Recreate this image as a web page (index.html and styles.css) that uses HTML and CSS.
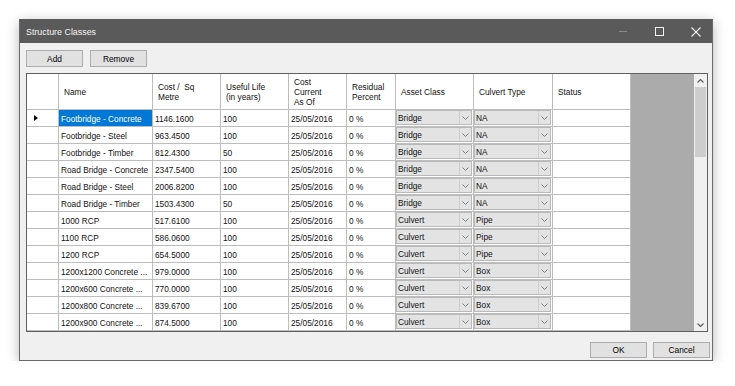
FILE: index.html
```html
<!DOCTYPE html>
<html lang="en">
<head>
    <meta charset="UTF-8">
    <title>Structure Classes</title>
    <link rel="stylesheet" href="styles.css">
</head>
<body>
    <div class="window">
        <div class="titlebar">
            <span class="title">Structure Classes</span>
            <div class="caption-buttons">
                <span class="cap cap-min"></span>
                <span class="cap cap-max"></span>
                <svg class="cap cap-close" width="10" height="10" viewBox="0 0 10 10"><path d="M0.5 0.5 L9.5 9.5 M9.5 0.5 L0.5 9.5" stroke="#f2f2f2" stroke-width="1.1" fill="none"/></svg>
            </div>
        </div>

        <div class="body">
            <div class="toolbar">
                <button class="btn">Add</button>
                <button class="btn">Remove</button>
            </div>

            <div class="grid">
                <div class="grid-table">
                    <div class="row header">
                        <div class="cell"></div>
                        <div class="cell">Name</div>
                        <div class="cell">Cost / &nbsp;Sq<br>Metre</div>
                        <div class="cell">Useful Life<br>(in years)</div>
                        <div class="cell">Cost<br>Current<br>As Of</div>
                        <div class="cell">Residual<br>Percent</div>
                        <div class="cell">Asset Class</div>
                        <div class="cell">Culvert Type</div>
                        <div class="cell">Status</div>
                    </div>

                    <div class="row current">
                        <div class="cell rowhead"><span class="marker"></span></div>
                        <div class="cell selected">Footbridge - Concrete</div>
                        <div class="cell">1146.1600</div>
                        <div class="cell">100</div>
                        <div class="cell">25/05/2016</div>
                        <div class="cell">0 %</div>
                        <div class="cell combo-cell"><div class="combo"><span class="combo-text">Bridge</span><span class="combo-arrow"></span></div></div>
                        <div class="cell combo-cell"><div class="combo"><span class="combo-text">NA</span><span class="combo-arrow"></span></div></div>
                        <div class="cell"></div>
                    </div>
                    <div class="row">
                        <div class="cell rowhead"></div>
                        <div class="cell">Footbridge - Steel</div>
                        <div class="cell">963.4500</div>
                        <div class="cell">100</div>
                        <div class="cell">25/05/2016</div>
                        <div class="cell">0 %</div>
                        <div class="cell combo-cell"><div class="combo"><span class="combo-text">Bridge</span><span class="combo-arrow"></span></div></div>
                        <div class="cell combo-cell"><div class="combo"><span class="combo-text">NA</span><span class="combo-arrow"></span></div></div>
                        <div class="cell"></div>
                    </div>
                    <div class="row">
                        <div class="cell rowhead"></div>
                        <div class="cell">Footbridge - Timber</div>
                        <div class="cell">812.4300</div>
                        <div class="cell">50</div>
                        <div class="cell">25/05/2016</div>
                        <div class="cell">0 %</div>
                        <div class="cell combo-cell"><div class="combo"><span class="combo-text">Bridge</span><span class="combo-arrow"></span></div></div>
                        <div class="cell combo-cell"><div class="combo"><span class="combo-text">NA</span><span class="combo-arrow"></span></div></div>
                        <div class="cell"></div>
                    </div>
                    <div class="row">
                        <div class="cell rowhead"></div>
                        <div class="cell">Road Bridge - Concrete</div>
                        <div class="cell">2347.5400</div>
                        <div class="cell">100</div>
                        <div class="cell">25/05/2016</div>
                        <div class="cell">0 %</div>
                        <div class="cell combo-cell"><div class="combo"><span class="combo-text">Bridge</span><span class="combo-arrow"></span></div></div>
                        <div class="cell combo-cell"><div class="combo"><span class="combo-text">NA</span><span class="combo-arrow"></span></div></div>
                        <div class="cell"></div>
                    </div>
                    <div class="row">
                        <div class="cell rowhead"></div>
                        <div class="cell">Road Bridge - Steel</div>
                        <div class="cell">2006.8200</div>
                        <div class="cell">100</div>
                        <div class="cell">25/05/2016</div>
                        <div class="cell">0 %</div>
                        <div class="cell combo-cell"><div class="combo"><span class="combo-text">Bridge</span><span class="combo-arrow"></span></div></div>
                        <div class="cell combo-cell"><div class="combo"><span class="combo-text">NA</span><span class="combo-arrow"></span></div></div>
                        <div class="cell"></div>
                    </div>
                    <div class="row">
                        <div class="cell rowhead"></div>
                        <div class="cell">Road Bridge - Timber</div>
                        <div class="cell">1503.4300</div>
                        <div class="cell">50</div>
                        <div class="cell">25/05/2016</div>
                        <div class="cell">0 %</div>
                        <div class="cell combo-cell"><div class="combo"><span class="combo-text">Bridge</span><span class="combo-arrow"></span></div></div>
                        <div class="cell combo-cell"><div class="combo"><span class="combo-text">NA</span><span class="combo-arrow"></span></div></div>
                        <div class="cell"></div>
                    </div>
                    <div class="row">
                        <div class="cell rowhead"></div>
                        <div class="cell">1000 RCP</div>
                        <div class="cell">517.6100</div>
                        <div class="cell">100</div>
                        <div class="cell">25/05/2016</div>
                        <div class="cell">0 %</div>
                        <div class="cell combo-cell"><div class="combo"><span class="combo-text">Culvert</span><span class="combo-arrow"></span></div></div>
                        <div class="cell combo-cell"><div class="combo"><span class="combo-text">Pipe</span><span class="combo-arrow"></span></div></div>
                        <div class="cell"></div>
                    </div>
                    <div class="row">
                        <div class="cell rowhead"></div>
                        <div class="cell">1100 RCP</div>
                        <div class="cell">586.0600</div>
                        <div class="cell">100</div>
                        <div class="cell">25/05/2016</div>
                        <div class="cell">0 %</div>
                        <div class="cell combo-cell"><div class="combo"><span class="combo-text">Culvert</span><span class="combo-arrow"></span></div></div>
                        <div class="cell combo-cell"><div class="combo"><span class="combo-text">Pipe</span><span class="combo-arrow"></span></div></div>
                        <div class="cell"></div>
                    </div>
                    <div class="row">
                        <div class="cell rowhead"></div>
                        <div class="cell">1200 RCP</div>
                        <div class="cell">654.5000</div>
                        <div class="cell">100</div>
                        <div class="cell">25/05/2016</div>
                        <div class="cell">0 %</div>
                        <div class="cell combo-cell"><div class="combo"><span class="combo-text">Culvert</span><span class="combo-arrow"></span></div></div>
                        <div class="cell combo-cell"><div class="combo"><span class="combo-text">Pipe</span><span class="combo-arrow"></span></div></div>
                        <div class="cell"></div>
                    </div>
                    <div class="row">
                        <div class="cell rowhead"></div>
                        <div class="cell">1200x1200 Concrete ...</div>
                        <div class="cell">979.0000</div>
                        <div class="cell">100</div>
                        <div class="cell">25/05/2016</div>
                        <div class="cell">0 %</div>
                        <div class="cell combo-cell"><div class="combo"><span class="combo-text">Culvert</span><span class="combo-arrow"></span></div></div>
                        <div class="cell combo-cell"><div class="combo"><span class="combo-text">Box</span><span class="combo-arrow"></span></div></div>
                        <div class="cell"></div>
                    </div>
                    <div class="row">
                        <div class="cell rowhead"></div>
                        <div class="cell">1200x600 Concrete ...</div>
                        <div class="cell">770.0000</div>
                        <div class="cell">100</div>
                        <div class="cell">25/05/2016</div>
                        <div class="cell">0 %</div>
                        <div class="cell combo-cell"><div class="combo"><span class="combo-text">Culvert</span><span class="combo-arrow"></span></div></div>
                        <div class="cell combo-cell"><div class="combo"><span class="combo-text">Box</span><span class="combo-arrow"></span></div></div>
                        <div class="cell"></div>
                    </div>
                    <div class="row">
                        <div class="cell rowhead"></div>
                        <div class="cell">1200x800 Concrete ...</div>
                        <div class="cell">839.6700</div>
                        <div class="cell">100</div>
                        <div class="cell">25/05/2016</div>
                        <div class="cell">0 %</div>
                        <div class="cell combo-cell"><div class="combo"><span class="combo-text">Culvert</span><span class="combo-arrow"></span></div></div>
                        <div class="cell combo-cell"><div class="combo"><span class="combo-text">Box</span><span class="combo-arrow"></span></div></div>
                        <div class="cell"></div>
                    </div>
                    <div class="row">
                        <div class="cell rowhead"></div>
                        <div class="cell">1200x900 Concrete ...</div>
                        <div class="cell">874.5000</div>
                        <div class="cell">100</div>
                        <div class="cell">25/05/2016</div>
                        <div class="cell">0 %</div>
                        <div class="cell combo-cell"><div class="combo"><span class="combo-text">Culvert</span><span class="combo-arrow"></span></div></div>
                        <div class="cell combo-cell"><div class="combo"><span class="combo-text">Box</span><span class="combo-arrow"></span></div></div>
                        <div class="cell"></div>
                    </div>
                </div>

                <div class="grid-empty"></div>

                <div class="vscroll">
                    <span class="sb-btn"><svg width="7" height="4" viewBox="0 0 7 4"><path d="M0.5 3.5 L3.5 0.5 L6.5 3.5" stroke="#606060" stroke-width="1.2" fill="none"/></svg></span>
                    <div class="sb-track"><div class="sb-thumb"></div></div>
                    <span class="sb-btn"><svg width="7" height="4" viewBox="0 0 7 4"><path d="M0.5 0.5 L3.5 3.5 L6.5 0.5" stroke="#606060" stroke-width="1.2" fill="none"/></svg></span>
                </div>
            </div>

            <div class="footer">
                <button class="btn btn-wide">OK</button>
                <button class="btn btn-wide">Cancel</button>
            </div>
        </div>
    </div>
</body>
</html>
```

FILE: styles.css
```css
:root {
    --font: "Segoe UI", "Liberation Sans", Arial, sans-serif;
    --window-bg: #f0f0f0;
    --title-bg: #5a5a5a;
    --grid-line: #bdbdbd;
    --grid-border: #5f5f5f;
    --empty-bg: #ababab;
    --select: #0078d7;
    --btn-bg: #e1e1e1;
    --btn-border: #adadad;
}
body {
    margin: 0;
    background-color: #ffffff;
    font-family: var(--font);
    color: #000;
}
.window {
    margin: 19px 0 0 19px;
    width: 694px;
    height: 342px;
    box-sizing: border-box;
    border: 1px solid #6a6a6a;
    border-top-color: var(--title-bg);
    background-color: var(--window-bg);
    box-shadow: 0 3px 12px rgba(0,0,0,0.28);
    display: flex;
    flex-direction: column;
}
.titlebar {
    height: 23px;
    background-color: var(--title-bg);
    display: flex;
    align-items: center;
    justify-content: space-between;
    padding-left: 6px;
}
.title {
    color: #f2f2f2;
    font-size: 8.9px;
}
.caption-buttons {
    display: flex;
    align-items: center;
}
.cap {
    display: block;
}
.cap-min {
    width: 8px;
    height: 1px;
    background-color: #8a8a8a;
    margin-right: 28px;
}
.cap-max {
    width: 7px;
    height: 7px;
    border: 1px solid #f2f2f2;
    margin-right: 27px;
}
.cap-close {
    margin-right: 11px;
}
.body {
    flex: 1;
    display: flex;
    flex-direction: column;
    padding: 7px 4px 0 6px;
}
.toolbar {
    display: flex;
    gap: 7px;
    margin-bottom: 6px;
}
.btn {
    width: 57px;
    height: 17px;
    padding: 0;
    background-color: var(--btn-bg);
    border: 1px solid var(--btn-border);
    font-family: var(--font);
    font-size: 8.4px;
    color: #000;
}
.grid {
    height: 259px;
    box-sizing: border-box;
    border: 1px solid var(--grid-border);
    display: flex;
    background-color: #fff;
}
.grid-table {
    display: flex;
    flex-direction: column;
}
.row {
    display: grid;
    grid-template-columns: 32px 94px 68px 68px 58px 49px 78px 79px 78px;
    height: 17px;
}
.row.header {
    height: 36px;
}
.cell {
    box-sizing: border-box;
    border-right: 1px solid var(--grid-line);
    border-bottom: 1px solid var(--grid-line);
    font-size: 8.3px;
    line-height: 18px;
    padding-left: 2px;
    white-space: nowrap;
    overflow: hidden;
    background-color: #fff;
    color: #111;
}
.header .cell {
    display: flex;
    align-items: center;
    line-height: 10px;
    padding-left: 5px;
    padding-top: 1px;
}
.rowhead {
    display: flex;
    align-items: center;
    padding-left: 7px;
}
.marker {
    width: 0;
    height: 0;
    border-top: 3px solid transparent;
    border-bottom: 3px solid transparent;
    border-left: 4px solid #000;
}
.cell.selected {
    background-color: var(--select);
    color: #fff;
}
.combo-cell {
    padding: 0 1px 1px 0;
}
.combo {
    height: 15px;
    box-sizing: border-box;
    border: 1px solid #b9b9b9;
    background-color: #e3e3e3;
    display: flex;
}
.combo-text {
    flex: 1;
    padding-left: 1px;
    line-height: 15px;
}
.combo-arrow {
    width: 11px;
    border-left: 1px solid #cfcfcf;
    background: url("data:image/svg+xml,%3Csvg xmlns='http://www.w3.org/2000/svg' width='7' height='4' viewBox='0 0 7 4'%3E%3Cpath d='M0.5 0.5 L3.5 3.5 L6.5 0.5' stroke='%23808080' stroke-width='1' fill='none'/%3E%3C/svg%3E") center no-repeat;
}
.grid-empty {
    flex: 1;
    background-color: var(--empty-bg);
}
.vscroll {
    width: 13px;
    background-color: var(--window-bg);
    display: flex;
    flex-direction: column;
}
.sb-btn {
    height: 13px;
    display: flex;
    align-items: center;
    justify-content: center;
}
.sb-track {
    flex: 1;
    padding: 0 1px;
}
.sb-thumb {
    height: 70px;
    background-color: #cdcdcd;
}
.footer {
    display: flex;
    justify-content: flex-end;
    gap: 6px;
    margin-top: 10px;
    margin-right: -2px;
}
.btn-wide {
    width: 57px;
    height: 16px;
}
```
